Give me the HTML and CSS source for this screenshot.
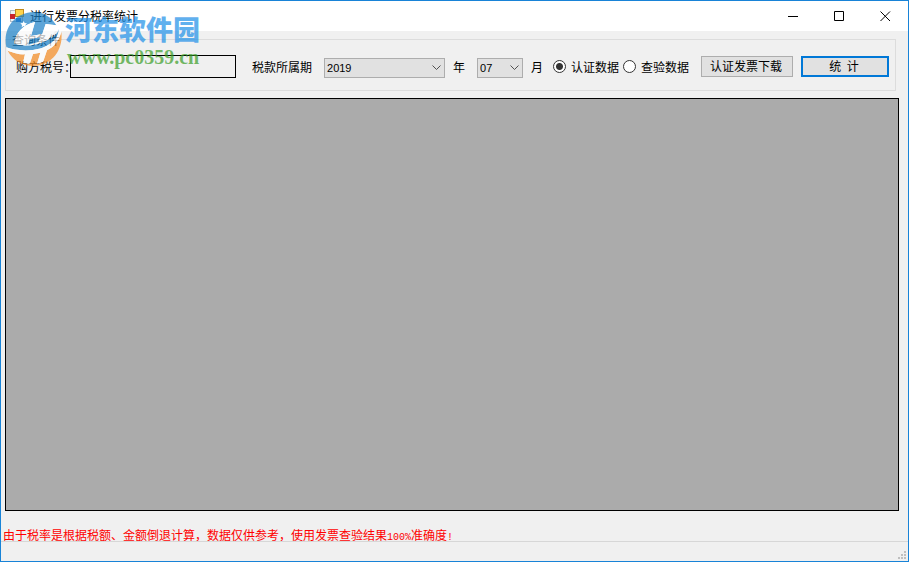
FILE: index.html
```html
<!DOCTYPE html>
<html lang="zh-CN">
<head>
<meta charset="utf-8">
<title>进行发票分税率统计</title>
<link rel="stylesheet" href="styles.css">
</head>
<body>
<div class="window">
  <header class="titlebar">
    <svg class="app-icon" width="14" height="14" viewBox="0 0 14 14" aria-hidden="true">
      <rect x="0.5" y="1.5" width="12" height="11" fill="#eef2f6" stroke="#b4bcc4"/>
      <rect x="0" y="5" width="5" height="5" fill="#c8232c"/>
      <rect x="5.5" y="0.5" width="8" height="7" fill="#fcd24a" stroke="#c08a1c"/>
      <rect x="6" y="9" width="5" height="4" fill="#3c78d0"/>
    </svg>
    <h1 class="title">进行发票分税率统计</h1>
    <button class="caption" type="button" aria-label="最小化"><svg width="11" height="11" viewBox="0 0 11 11"><path d="M0 5.5H10"/></svg></button>
    <button class="caption" type="button" aria-label="最大化"><svg width="11" height="11" viewBox="0 0 11 11"><path d="M.5 .5H9.5V9.5H.5Z"/></svg></button>
    <button class="caption" type="button" aria-label="关闭"><svg width="11" height="11" viewBox="0 0 11 11"><path d="M.5 .5L10 10M10 .5L.5 10"/></svg></button>
  </header>

  <fieldset class="query">
    <legend>查询条件</legend>
    <div class="row">
      <label class="tax-label" for="tax-no">购方税号：</label>
      <input class="tax-no" id="tax-no" type="text">
      <label class="period-label" for="year">税款所属期</label>
      <span class="combo combo-year">
        <select id="year"><option>2019</option></select>
        <svg width="9" height="6" viewBox="0 0 9 6"><path d="M.5 .5L4.5 4.5L8.5 .5"/></svg>
      </span>
      <label class="unit" for="year">年</label>
      <span class="combo combo-month">
        <select id="month"><option>07</option></select>
        <svg width="9" height="6" viewBox="0 0 9 6"><path d="M.5 .5L4.5 4.5L8.5 .5"/></svg>
      </span>
      <label class="unit unit-month" for="month">月</label>
      <label class="choice"><input type="radio" name="source" checked>认证数据</label>
      <label class="choice"><input type="radio" name="source">查验数据</label>
      <div class="actions">
        <button class="btn" type="button">认证发票下载</button>
        <button class="btn btn-default" type="button">统&nbsp; 计</button>
      </div>
    </div>
  </fieldset>

  <main class="grid"></main>
  <p class="notice">由于税率是根据税额、金额倒退计算，数据仅供参考，使用发票查验结果<span class="narrow">100%</span>准确度<span class="narrow">!</span></p>
  <footer class="statusbar">
    <svg width="8" height="8" viewBox="0 0 8 8" aria-hidden="true"><path d="M6 0h2v2h-2zM3 3h2v2h-2zM6 3h2v2h-2zM0 6h2v2h-2zM3 6h2v2h-2zM6 6h2v2h-2z"/></svg>
  </footer>

  <div class="watermark">
    <svg class="mark" width="58" height="58" viewBox="6 0 174 174" aria-hidden="true">
      <path fill="#1a80c8" d="M10 112C-2 54 36 8 92 6C122 6 146 22 160 46L128 42L118 72L84 78L96 36C60 44 36 70 34 100C60 112 100 106 130 92C152 82 164 70 168 58C166 92 130 116 90 120C56 124 28 118 10 112Z"/>
      <path fill="#f58a1f" d="M175 66C182 124 142 168 92 168C58 168 28 150 14 122C34 130 56 134 66 133L60 158L80 162L90 132L112 128L102 162L120 156L132 121C154 110 168 92 175 66Z"/>
      <path fill="#fff" d="M10 112C28 118 56 124 90 120C130 116 166 92 168 58L175 66C168 92 154 110 132 121L120 156L102 162L112 128L90 132L80 162L60 158L66 133C50 134 30 128 14 122Z"/>
      <path fill="#fff" d="M96 36L84 78L118 72L128 42L160 46C158 66 148 82 130 92C100 106 60 112 34 100C36 70 60 44 96 36ZM62 33L65 39L72 40L67 45L68 52L62 48L56 52L57 45L52 40L59 39Z"/>
      <path fill="#1a80c8" d="M80 88L112 82L106 96L76 104Z"/>
    </svg>
    <div class="brand">
      <span class="brand-name">河东软件园</span>
      <span class="brand-url">www.pc0359.cn</span>
    </div>
  </div>
</div>
</body>
</html>
```
FILE: styles.css
```css
* { box-sizing: border-box; }

body {
  margin: 0;
  color: #000;
  font: 12px/14px "Noto Sans CJK SC", sans-serif;
}

input, select, button { font: inherit; color: inherit; margin: 0; }

.window {
  position: relative;
  display: flex;
  flex-direction: column;
  min-height: 100vh;
  border: 1px solid #1883d7;
  background: #f0f0f0;
}

.titlebar {
  display: flex;
  align-items: center;
  height: 30px;
  padding-left: 9px;
  background: #fff;
}

.app-icon { margin-right: 6px; }

.title {
  flex: 1;
  margin: 0;
  font-size: 12px;
  font-weight: 400;
}

.caption {
  display: grid;
  place-items: center;
  width: 46px;
  height: 30px;
  padding: 0;
  border: 0;
  background: none;
}

.caption svg { fill: none; stroke: #000; }

.query {
  min-width: 0;
  margin: 1px 12px 0 4px;
  padding: 8px 6px 12px 10px;
  border: 1px solid #dcdcdc;
}

.query legend {
  margin-left: -5px;
  padding: 0 1px;
  line-height: 15px;
}

.row {
  display: flex;
  align-items: center;
  height: 23px;
  line-height: 12px;
  white-space: nowrap;
}

.tax-label { width: 54px; }

.tax-no {
  width: 166px;
  height: 23px;
  padding: 0 3px;
  border: 1px solid #000;
  background: #f0f0f0;
}

.period-label { margin: 0 12px 0 16px; }

.combo { display: grid; align-items: center; align-self: flex-end; }
.combo > * { grid-area: 1 / 1; }
.combo-year { width: 121px; }
.combo-month { width: 46px; }

.combo select {
  width: 100%;
  height: 20px;
  padding: 0 2px;
  appearance: none;
  border: 1px solid #adadad;
  border-radius: 0;
  background: #e1e1e1;
  font: 11px "Liberation Sans", sans-serif;
}

.combo svg {
  justify-self: end;
  margin-right: 4px;
  fill: none;
  stroke: #505050;
  pointer-events: none;
}

.unit { margin: 0 12px 0 8px; }
.unit-month { margin-right: 10px; }

.choice { display: flex; align-items: center; gap: 5px; margin-right: 4px; }

.choice input {
  width: 13px;
  height: 13px;
  appearance: none;
  border: 1px solid #333;
  border-radius: 50%;
  background: #fff;
}

.choice input:checked { background: radial-gradient(circle, #333 3px, #fff 4px); }

.actions { display: flex; gap: 8px; margin-left: auto; }

.btn {
  width: 92px;
  height: 21px;
  padding: 0 2px 2px 0;
  border: 1px solid #adadad;
  background: #e1e1e1;
}

.btn-default { width: 88px; border: 2px solid #0078d7; }

.grid {
  flex: 1;
  margin: 7px 9px 0 4px;
  border: 1px solid #000;
  background: #ababab;
}

.notice {
  margin: 0;
  padding: 18px 2px 0;
  color: #f00;
  line-height: 12px;
}

.narrow {
  font-family: "Liberation Mono", monospace;
  font-size: 10px;
  line-height: 0;
}

.statusbar {
  display: flex;
  align-items: flex-end;
  justify-content: flex-end;
  height: 20px;
  padding: 2px;
  border-top: 1px solid #d7d7d7;
}

.statusbar svg { fill: #bfbfbf; }

.watermark {
  position: absolute;
  top: 9px;
  left: 4px;
  display: flex;
  gap: 2px;
  pointer-events: none;
}

.mark { opacity: 0.7; }

.brand {
  display: flex;
  flex-direction: column;
  padding-top: 5px;
  opacity: 0.7;
}

.brand-name {
  color: #1e90e8;
  font-size: 27px;
  font-weight: 900;
  line-height: 28px;
}

.brand-url {
  padding-left: 2px;
  color: #3a9e28;
  font: bold 20px/28px "Liberation Serif", serif;
}
```
